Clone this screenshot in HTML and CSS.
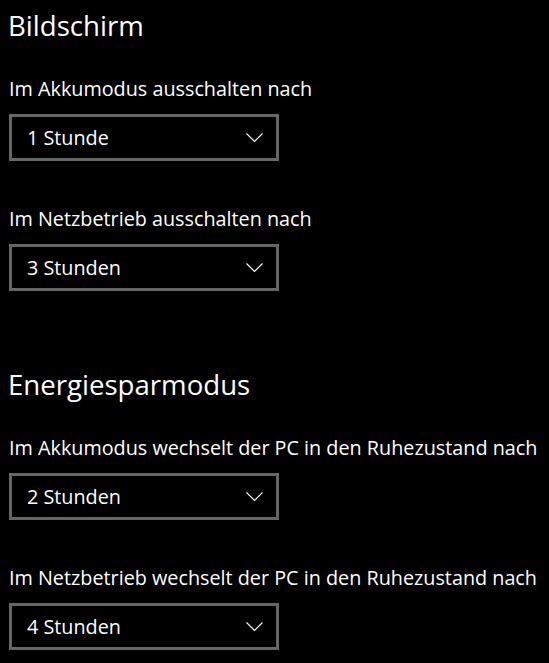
FILE: index.html
```html
<!DOCTYPE html>
<html lang="de">
<head>
<meta charset="utf-8">
<title>Bildschirm und Energiesparmodus</title>
<link rel="stylesheet" href="styles.css">
</head>
<body>
<main class="page">
  <section class="group">
    <h2 class="group-title">Bildschirm</h2>
    <div class="field">
      <div class="field-label">Im Akkumodus ausschalten nach</div>
      <div class="combo"><span class="combo-value">1 Stunde</span><svg class="chevron" width="18" height="10" viewBox="0 0 18 10"><polyline points="0.5,0.5 8.5,8.5 16.5,0.5" /></svg></div>
    </div>
    <div class="field">
      <div class="field-label">Im Netzbetrieb ausschalten nach</div>
      <div class="combo"><span class="combo-value">3 Stunden</span><svg class="chevron" width="18" height="10" viewBox="0 0 18 10"><polyline points="0.5,0.5 8.5,8.5 16.5,0.5" /></svg></div>
    </div>
  </section>
  <section class="group">
    <h2 class="group-title">Energiesparmodus</h2>
    <div class="field">
      <div class="field-label">Im Akkumodus wechselt der PC in den Ruhezustand nach</div>
      <div class="combo"><span class="combo-value">2 Stunden</span><svg class="chevron" width="18" height="10" viewBox="0 0 18 10"><polyline points="0.5,0.5 8.5,8.5 16.5,0.5" /></svg></div>
    </div>
    <div class="field">
      <div class="field-label">Im Netzbetrieb wechselt der PC in den Ruhezustand nach</div>
      <div class="combo"><span class="combo-value">4 Stunden</span><svg class="chevron" width="18" height="10" viewBox="0 0 18 10"><polyline points="0.5,0.5 8.5,8.5 16.5,0.5" /></svg></div>
    </div>
  </section>
</main>
</body>
</html>
```
FILE: styles.css
```css
html, body {
  margin: 0;
  padding: 0;
  background: #000;
}
body {
  color: #fff;
  font-family: "Open Sans", "Noto Sans", sans-serif;
}
.page {
  padding: 7px 0 0 9px;
  display: flex;
  flex-direction: column;
  gap: 75px;
}
.group {
  display: flex;
  flex-direction: column;
}
.group-title {
  margin: 0 0 0 -1px;
  font-size: 27.6px;
  font-weight: 400;
  line-height: 36px;
}
.field {
  display: flex;
  flex-direction: column;
  gap: 11px;
  margin-top: 32px;
}
.field + .field {
  margin-top: 44px;
}
.field-label {
  font-size: 19.8px;
  line-height: 28px;
  white-space: nowrap;
}
.combo {
  box-sizing: border-box;
  width: 270px;
  height: 47px;
  border: 3px solid #666;
  display: flex;
  align-items: center;
  justify-content: space-between;
  padding: 0 12px 0 15px;
  font-size: 19.8px;
}
.chevron {
  fill: none;
  stroke: #fff;
  stroke-width: 1.1;
}
```
